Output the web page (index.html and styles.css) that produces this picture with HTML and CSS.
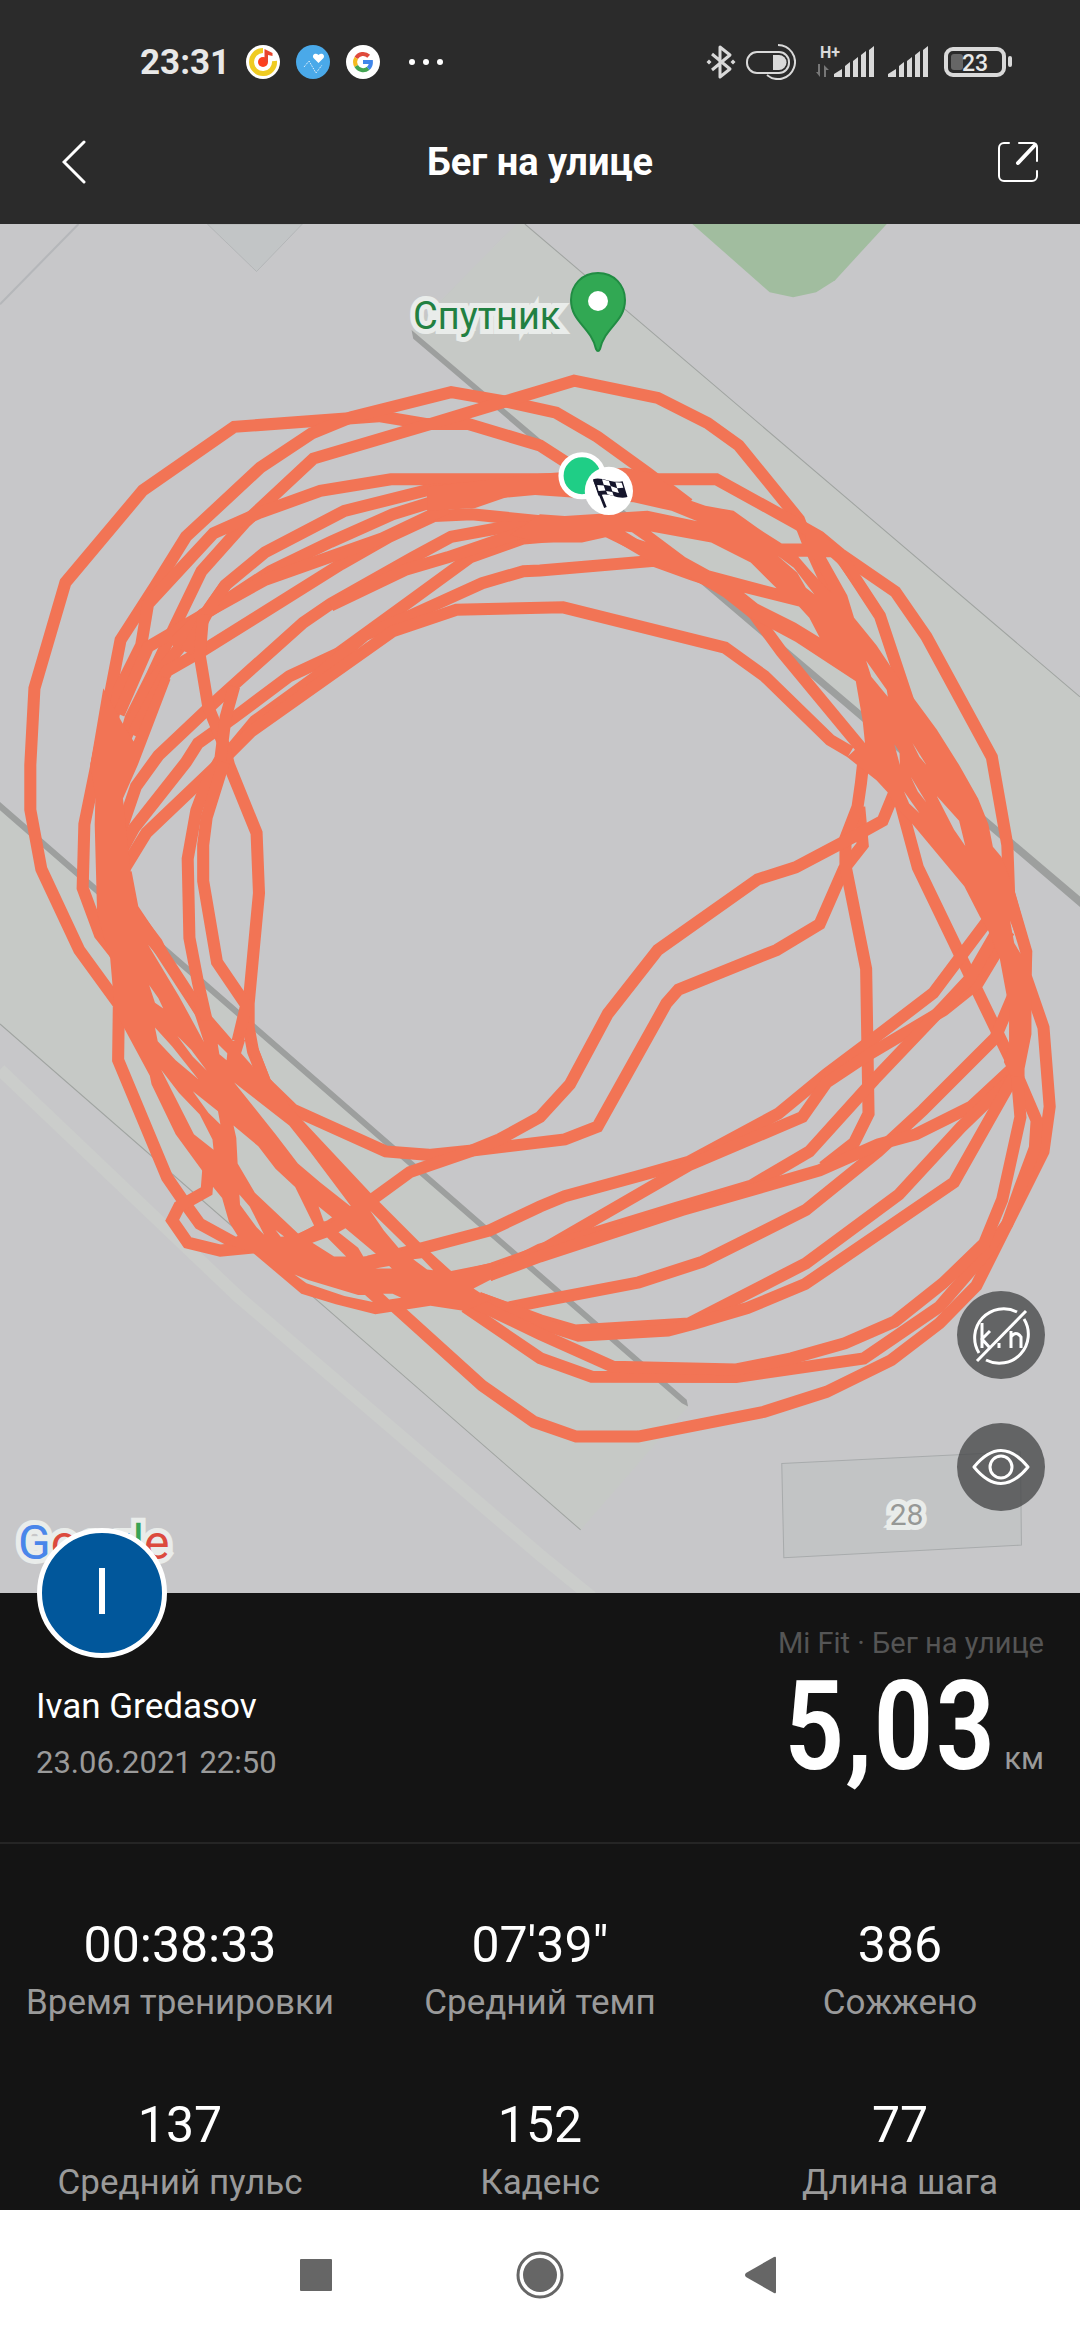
FILE: index.html
```html
<!DOCTYPE html>
<html lang="ru">
<head>
  <meta charset="UTF-8">
  <meta name="viewport" content="width=device-width, initial-scale=1.0">
  <title>Бег на улице</title>
  <link rel="stylesheet" href="styles.css">
</head>
<body>
  <!-- System status bar -->
  <div class="status-bar">
    <div class="status-left">
      <span class="clock">23:31</span>
      <svg class="app-icon" viewBox="0 0 34 34">
        <circle cx="17" cy="17" r="17" fill="#fff"/>
        <path d="M17 5.500A11.500 11.500 0 1 0 28.500 16" fill="none" stroke="#efcb22" stroke-width="5"/>
        <circle cx="17" cy="17" r="5" fill="#fc3f1d"/>
        <path d="M18.500 17V4l8 4v3l-4.500-1v7z" fill="#e8452c"/>
      </svg>
      <svg class="app-icon" viewBox="0 0 34 34">
        <circle cx="17" cy="17" r="17" fill="#4aa9e9"/>
        <path d="M22.500 18l-5-5c-2-3 2-6 5-3 3-3 7 0 5 3z" fill="#fff"/>
        <path d="M8 22l5-6 7 12 6-8" fill="none" stroke="#fff" stroke-width="1" stroke-dasharray="1 1"/>
      </svg>
      <svg class="app-icon" viewBox="0 0 34 34">
        <circle cx="17" cy="17" r="17" fill="#fff"/>
        <path d="M10.200 13a8 8 0 0 1 12.500-1.700" fill="none" stroke="#df4a3c" stroke-width="4"/>
        <path d="M10.200 13a8 8 0 0 0 0 8" fill="none" stroke="#f5bb1f" stroke-width="4"/>
        <path d="M10.200 21a8 8 0 0 0 12 2.400" fill="none" stroke="#43a553" stroke-width="4"/>
        <path d="M22.200 23.400a8 8 0 0 0 2.700-6.400H17" fill="none" stroke="#3f86ea" stroke-width="4"/>
      </svg>
      <svg class="more-icon" viewBox="0 0 36 8" fill="#fff">
        <circle cx="4" cy="4" r="3"/><circle cx="18" cy="4" r="3"/><circle cx="32" cy="4" r="3"/>
      </svg>
    </div>
    <div class="status-right">
      <svg class="bt-icon" viewBox="0 0 30 36" fill="none" stroke="#d9d9d9" stroke-width="3" stroke-linejoin="round">
        <path d="M6 10l18 15-10 8V3l10 8L6 26"/>
        <path d="M3 15.500l2.500 2.500L3 20.500.500 18zM27 15.500l2.500 2.500-2.500 2.500-2.500-2.500z" fill="#d9d9d9" stroke="none"/>
      </svg>
      <svg class="toggle-icon" viewBox="0 0 50 36" fill="none" stroke="#d9d9d9" stroke-width="2">
        <rect x="1" y="8" width="42" height="21" rx="10"/>
        <path d="M27 11h6a7 7 0 0 1 0 15h-6z" fill="#d9d9d9" stroke="none"/>
        <path d="M32 1a17 17 0 1 1-11 30"/>
      </svg>
      <svg class="signal-icon wide" viewBox="0 0 58 36" fill="#d9d9d9">
        <text class="net-type" x="4" y="14">H+</text>
        <path d="M18 33v-3l8-5v8zM29 33V22l5-4v15zM37 33V17l5-4v20zM45 33V11l5-4v26zM53 33V6l5-4v31z"/>
        <path d="M0 28h2v-8h2v13zM8 33V21l5 5h-3v7z" fill="#777"/>
      </svg>
      <svg class="signal-icon" viewBox="0 0 40 36" fill="#d9d9d9">
        <path d="M0 33v-3l8-5v8zM11 33V22l5-4v15zM19 33V17l5-4v20zM27 33V11l5-4v26zM35 33V6l5-4v31z"/>
      </svg>
      <svg class="battery-icon" viewBox="0 0 68 30">
        <rect x="2" y="2" width="58" height="26" rx="7" fill="none" stroke="#d9d9d9" stroke-width="4"/>
        <rect x="7" y="7" width="12" height="16" rx="3" fill="#666"/>
        <rect x="64" y="9" width="4" height="11" rx="2" fill="#d9d9d9"/>
        <text class="battery-level" x="31" y="24" text-anchor="middle">23</text>
      </svg>
    </div>
  </div>

  <!-- Title bar -->
  <header class="title-bar">
    <button class="icon-btn" aria-label="Назад">
      <svg class="back-icon" viewBox="0 0 24 44" fill="none" stroke="#fff" stroke-width="3" stroke-linecap="round">
        <path d="M22 2L2 22l20 20"/>
      </svg>
    </button>
    <h1>Бег на улице</h1>
    <button class="icon-btn" aria-label="Поделиться">
      <svg class="share-icon" viewBox="0 0 40 40" fill="none" stroke="#fff" stroke-width="2" stroke-linecap="round">
        <path d="M11 1H6a5 5 0 0 0-5 5v28a5 5 0 0 0 5 5h28a5 5 0 0 0 5-5v-5"/>
        <path d="M21 1h14a4 4 0 0 1 4 4v14"/>
        <path d="M20 21L37 3" stroke-width="4"/>
      </svg>
    </button>
  </header>

  <!-- Map with the route -->
  <section class="map">
    <svg class="map-canvas" viewBox="0 -3 3136 3976">
      <rect y="-3" width="3136" height="3976" fill="#c7c7c9"/>
      <!-- ground -->
      <path d="M1500-3L1195 305 3136 1970V1370L1524-3z" fill="#c6c9c6"/>
      <path d="M0 1680L1998 3430 1686 3789 0 2320z" fill="#c6c9c6"/>
      <path d="M2010-3l225 198 68 15 67-15 55-35L2575-3z" fill="#a1bd9f"/>
      <path d="M602-3L745 135 878-3z" fill="#c2c5c6" stroke="#acafb1" stroke-width="2"/>
      <path d="M2270 3596l693-34 3 271-690 37z" fill="#c2c4c5" stroke="#a8abac" stroke-width="3"/>
      <path d="M0 2453l690 657 878 752 150 122" fill="none" stroke="#cbcdcb" stroke-width="36"/>
      <path d="M228-3L0 230" stroke="#b5b7ba" stroke-width="6"/>
      <path d="M1524-3l1612 1373M0 2320l1686 1469" fill="none" stroke="#a0a4a1" stroke-width="3"/>
      <path d="M1195 305l5 25 1936 1650v-30zM0 1675v24l1980 1722 18 10-4-20z" fill="#9d9f9e"/>

      <!-- route -->
      <g class="route">
        <path d="M430 2400L350 2270 230 2105 120 1870 88 1698 88 1568 100 1345 190 1038 415 770 680 586 1100 555 1240 578 1360 578 1568 640 1700 725"/>
        <path d="M280 1568L350 1205 450 1050 540 905 755 705 905 605 1020 558 1310 485 1480 515 1615 545 1735 615 1880 720 2000 810"/>
        <path d="M340 1568L380 1430 440 1310 510 1160 585 1005 710 865 910 678 1250 578 1458 515 1568 482 1667 452 1910 502 2055 575 2145 640 2320 855 2345 920 2445 1140"/>
        <path d="M300 1568L345 1350 410 1220 430 1100 620 895 755 835 930 772 1135 738 2080 738 2310 865 2380 905 2440 955 2600 1065 2690 1195 2880 1545 2925 1800 2930 1940 2980 2110 2978 2180 3030 2330 3048 2560 3030 2690 2925 2900 2835 3080 2728 3189 2588 3296 2400 3388 2218 3446 1853 3518 1673 3518 1550 3475 1400 3370 1140 3135"/>
        <path d="M360 1500L430 1340 560 1180 655 1045 770 950 1000 830 1240 770 1600 755"/>
        <path d="M345 1420L430 1225 610 1120 785 1005 960 920 1140 840 1300 790 1568 765"/>
        <path d="M385 1480L485 1295 590 1235 990 985 1130 905 1260 845 1370 840 1568 860"/>
        <path d="M500 1220L590 1130 770 1030 1110 910 1300 820"/>
        <path d="M540 1240L610 1110 655 1045"/>
        <path d="M330 1820L395 1630 460 1540 640 1370 880 1155 960 1100 1200 965 1310 905 1450 880 1600 875"/>
        <path d="M330 1860L390 1750 540 1560 575 1505 680 1430 840 1310 980 1245 1180 1100 1365 965 1520 910 1640 900"/>
        <path d="M960 1105L1180 1000 1300 965 1520 890"/>
        <path d="M330 1920L425 1765 640 1560 740 1440 920 1310 1060 1190 1190 1135 1400 1040 1520 1005 1568 1003 1900 975 2010 1015 2120 1050"/>
        <path d="M640 1560L730 1470 1140 1180 1325 1117 1635 1110 2105 1227 2220 1310 2410 1495 2470 1530"/>
        <path d="M590 1130L580 1250 605 1400 650 1510 665 1568 745 1765 752 1940 722 2260 722 2330 735 2400 770 2490 850 2568 1120 2690 1245 2700 1365 2688 1640 2655 1735 2618 1935 2260 1970 2220 2255 2105 2380 2030 2450 1870 2505 1800 2495 1690"/>
        <path d="M680 1340L655 1430 640 1550 600 1620 570 1700 545 1840 550 2070 575 2200 600 2310 615 2390"/>
        <path d="M650 1560L600 1720 590 1800 590 1905 630 2140 715 2265 690 2370"/>
        <path d="M365 1880L385 1985 455 2090 585 2290 680 2400"/>
        <path d="M315 1400L280 1568 245 1740 240 1925 290 2060 345 2130"/>
        <path d="M345 2270L343 2425 485 2765 540 2845 580 2900 690 2960"/>
        <path d="M605 2740L600 2805 520 2850 500 2890 545 2955 640 2978 780 2965"/>
        <path d="M1765 890L2010 1010 2130 1070 2190 1130 2270 1240 2510 1530"/>
        <path d="M2400 930L2450 975 2555 1135 2640 1390"/>
        <path d="M2510 1530L2500 1620 2490 1690 2455 1780 2455 1860 2515 2160 2522 2580 2480 2665 2390 2735"/>
        <path d="M2600 1640L2563 1730 2490 1770 2310 1865 2200 1900 1910 2105 1765 2290 1655 2495 1568 2590 1450 2655 1365 2690 1190 2750 1080 2830 960 2905 860 2950"/>
        <path d="M2615 1680L2665 1865 2935 2425 3010 2600 3005 2680 2960 2800 2925 2900 2858 2990 2728 3141 2508 3291 2138 3345 1718 3344 1568 3290 1350 3141"/>
        <path d="M2890 1990L2710 2230 2540 2360 2400 2465 2260 2580 2000 2720 1860 2760 1640 2820 1568 2850 1420 2920 1230 2970 1070 3010"/>
        <path d="M2930 2050L2840 2200 2740 2280 2520 2410 2400 2490 2330 2590 2000 2730 1740 2880 1568 2980 1430 3030 1310 3060"/>
        <path d="M2890 2060L2815 2190 2740 2270 2540 2480 2350 2690 2180 2790 1960 2855 1568 2975 1420 3050"/>
        <path d="M2945 2230L2890 2360 2680 2570 2550 2690 2340 2860 2040 3010 1855 3070 1568 3125 1470 3145 1390 3115"/>
        <path d="M2960 2430L2820 2560 2660 2640 2550 2670 2380 2745 1980 2860 1568 2995 1420 3050"/>
        <path d="M2935 2480L2790 2620 2610 2815 2340 3015 2000 3190 1670 3210 1568 3180 1390 3115"/>
        <path d="M2945 2470L2770 2780 2338 3075 2170 3145 2015 3190 1940 3210 1680 3225 1540 3180"/>
        <path d="M2950 2440L2963 2590 2910 2830 2858 2957 2738 3073 2598 3184 2453 3247 2298 3291 2138 3323 1780 3315 1568 3220 1380 3130"/>
      </g>

      <!-- stretches where the laps run on top of each other -->
      <path class="route-fill" d="M300 1345L262 1568 277 1658 275 1740 282 2000 320 2130 333 2280 365 2340 435 2470 440 2495 510 2640 590 2750 620 2795 645 2825 665 2895 690 2935 655 2957 735 2985 875 3103 975 3134 1090 3163 1250 3138 1350 3153 1425 3121 1375 3088 1430 3060 1430 3013 1310 3037 1225 2960 1080 2815 855 2575 785 2480 750 2390 700 2360 675 2370 615 2310 585 2310 470 2075 402 1985 383 1935 378 1860 368 1770 357 1665 400 1568 495 1320 470 1310 388 1500 352 1440z
        M430 2090L480 2150 565 2290 592 2372 520 2240z
        M433 2207L460 2245 474 2275 450 2258z
        M450 2330L500 2385 575 2480 510 2425 458 2370z
        M515 2355L555 2395 600 2455 560 2415z
        M468 2453L520 2520 580 2583 617 2655 620 2685 563 2640z
        M560 2515L633 2573 640 2612 605 2578z
        M680 2490L840 2615 900 2690 1022 2853 930 2780 865 2725 800 2640z
        M713 2363L740 2450 700 2405z
        M632 2377L660 2405 658 2425 637 2408z
        M678 2615L750 2675 800 2740 857 2793 912 2905 867 2930 740 2810 690 2725 686 2650z
        M695 2815L725 2850 767 2932 745 2910 697 2845z
        M800 2918L825 2937 815 2938z
        M925 2850L972 2888 960 2897 940 2893z
        M1075 2862L1187 2972 1163 2977 1115 2920z
        M983 2925L1003 2913 1095 2990 1055 2995 1040 2970z
        M907 2955L950 2940 1005 2995 970 2995z
        M1090 3030L1130 3023 1138 3030z
        M1200 3003L1225 3000 1258 3035 1240 3033z
        M855 3047L895 3063 1040 3107 1060 3107 1083 3127 1000 3110 890 3073z
        M1112 3103L1140 3103 1165 3115 1130 3120z"/>
      <path class="route-fill" d="M1240 760L1568 722 1815 705 1895 720 1945 757 1990 795 2048 815 2130 830 2200 880 2270 925 2340 925 2338 895 2390 895 2440 945 2440 970 2545 1140 2587 1283 2650 1370 2720 1465 2785 1568 2840 1665 2870 1740 2883 1805 2908 1835 2945 1930 2995 2110 2995 2350 2975 2450 2975 2475 2935 2470 2915 2430 2930 2380 2930 2275 2903 2130 2870 2050 2845 2008 2800 1920 2650 1740 2600 1690 2580 1650 2545 1612 2460 1545 2500 1508 2512 1508 2505 1440 2485 1325 2310 1210 2170 1135 2100 1080 2000 1020 1900 985 1765 905 1690 922 1568 922 1480 900 1568 840 1640 845 1880 830 2025 860 1950 830 1840 805 1640 790 1500 780 1380 822 1240 830z
        M1815 890L1835 892 1875 920 1850 912z
        M1890 890L2065 922 2180 980 2255 1055 2060 1003 1990 965z
        M2160 1068L2320 1108 2350 1140 2380 1198 2310 1155 2200 1100z
        M2258 960L2305 995 2365 1073 2340 1053 2315 1010z
        M2318 963L2360 963 2415 1070 2350 1000z
        M2398 965L2420 965 2545 1140 2587 1283 2545 1220 2480 1140 2460 1075z
        M2515 1265L2575 1350 2578 1370 2530 1312z
        M2597 1508L2612 1530 2613 1568z
        M2650 1505L2690 1568 2670 1545z
        M2645 1603L2690 1677 2665 1645z
        M2625 1645L2670 1708 2640 1680z
        M2720 1658L2785 1730 2803 1803 2770 1755z
        M2933 2020L2965 2105 2965 2118 2945 2085z"/>

      <!-- start and finish -->
      <circle cx="1690" cy="728" r="61" fill="#1fce86" stroke="#fff" stroke-width="15"/>
      <circle cx="1768" cy="772" r="70" fill="#fff"/>
      <path d="M1726 740l32 80" stroke="#15152b" stroke-width="8"/>
      <path d="M1722 738c30-8 50 14 86 6l14 46c-34 8-50-16-84-4z" fill="#15152b"/>
      <path d="M1748 738l20 5 5 15-20-4zM1787 747l18 1 5 15-18 1zM1734 755l19 1 5 15-20 1zM1773 758l19 6 5 14-19-5zM1760 772l18 3 4 12-18-5z" fill="#fff"/>
    </svg>

    <div class="place">
      <span class="place-name">Спутник</span>
      <svg class="pin-icon" viewBox="0 0 56 80">
        <path d="M28 1C12 1 1 13 1 28c0 22 20 27 25 49q2 4 4 0c5-22 25-27 25-49C55 13 44 1 28 1z" fill="#31a853" stroke="#218c43" stroke-width="2"/>
        <circle cx="28" cy="29" r="10" fill="#fff"/>
      </svg>
    </div>
    <span class="house-number">28</span>

    <div class="google-logo"><span class="blue">G</span><span class="red">o</span><span class="yellow">o</span><span class="blue">g</span><span class="green">l</span><span class="red">e</span></div>

    <div class="map-buttons">
      <button class="round-btn" aria-label="Скрыть километры">
        <svg viewBox="0 0 88 88" fill="none" stroke="#fff" stroke-width="3">
          <path d="M60 21A29 29 0 0 0 22 62M29 69A29 29 0 0 0 67 28"/>
          <path d="M20 70L69 20"/>
          <path d="M25 32v25M33 40l-8 8 8 9M42 52v5M54 57V40M54 46q5-7 10 0v11"/>
        </svg>
      </button>
      <button class="round-btn" aria-label="Показать карту">
        <svg viewBox="0 0 88 88" fill="none" stroke="#fff" stroke-width="3" stroke-linejoin="round">
          <path d="M17 44q27-33 54 0-27 33-54 0z"/>
          <circle cx="44" cy="44" r="11"/>
        </svg>
      </button>
    </div>
  </section>

  <!-- Workout summary -->
  <section class="summary">
    <div class="avatar">I</div>
    <div class="user">
      <div class="user-name">Ivan Gredasov</div>
      <div class="date">23.06.2021 22:50</div>
    </div>
    <div class="distance">
      <div class="source">Mi Fit · Бег на улице</div>
      <div class="distance-value"><strong>5,03</strong> <span>км</span></div>
    </div>
  </section>

  <dl class="stats">
    <div><dd>00:38:33</dd><dt>Время тренировки</dt></div>
    <div><dd>07'39"</dd><dt>Средний темп</dt></div>
    <div><dd>386</dd><dt>Сожжено</dt></div>
    <div><dd>137</dd><dt>Средний пульс</dt></div>
    <div><dd>152</dd><dt>Каденс</dt></div>
    <div><dd>77</dd><dt>Длина шага</dt></div>
  </dl>

  <!-- System navigation -->
  <nav class="nav-bar">
    <button aria-label="Недавние"><svg viewBox="0 0 48 48"><rect x="8" y="8" width="32" height="32" rx="1"/></svg></button>
    <button aria-label="Домой"><svg viewBox="0 0 48 48"><circle cx="24" cy="24" r="17"/><circle cx="24" cy="24" r="22" fill="none" stroke="#666" stroke-width="3"/></svg></button>
    <button aria-label="Назад"><svg viewBox="0 0 48 48"><path d="M36 7v34q0 2-2 1L6 26q-2-2 0-4L34 6q2-1 2 1z"/></svg></button>
  </nav>
</body>
</html>
```

FILE: styles.css
```css
* {
  box-sizing: border-box;
}
body {
  margin: 0;
  min-height: 100vh;
  display: flex;
  flex-direction: column;
  font-family: Roboto, "Noto Sans", sans-serif;
  background-color: #141414;
  color: #fff;
}
button {
  padding: 0;
  border: none;
  background: none;
  cursor: pointer;
}
svg {
  display: block;
}

/* Status bar */
.status-bar {
  display: flex;
  justify-content: space-between;
  align-items: center;
  height: 100px;
  padding: 24px 68px 0 140px;
  background-color: #2b2b2b;
}
.status-left, .status-right {
  display: flex;
  align-items: center;
}
.clock {
  margin-right: 16px;
  font-size: 35px;
  font-weight: bold;
  color: #e8e8e8;
}
.app-icon {
  width: 34px;
  height: 34px;
  margin-right: 16px;
}
.more-icon {
  width: 36px;
  height: 8px;
  margin-left: 12px;
}
.bt-icon {
  width: 30px;
  height: 36px;
  margin-right: 10px;
}
.toggle-icon {
  width: 50px;
  height: 36px;
  margin-right: 20px;
}
.signal-icon {
  width: 40px;
  height: 36px;
  margin-right: 16px;
}
.signal-icon.wide {
  width: 58px;
  margin-right: 14px;
}
.battery-icon {
  width: 68px;
  height: 30px;
}
.net-type {
  font-size: 16px;
  font-weight: bold;
}
.battery-level {
  font-size: 23px;
  font-weight: 500;
  fill: #e8e8e8;
}

/* Title bar */
.title-bar {
  display: grid;
  grid-template-columns: 1fr auto 1fr;
  align-items: center;
  height: 124px;
  padding: 0 42px 0 42px;
  background-color: #2b2b2b;
}
.title-bar h1 {
  margin: 0;
  font-size: 38px;
  line-height: 48px;
}
.icon-btn {
  display: flex;
  width: 64px;
  height: 60px;
  align-items: center;
  justify-content: center;
}
.icon-btn:last-child {
  justify-self: end;
  justify-content: flex-end;
}
.back-icon {
  width: 24px;
  height: 44px;
}
.share-icon {
  width: 40px;
  height: 40px;
}

/* Map */
.map {
  position: relative;
}
.map-canvas {
  width: 100%;
}
.route path {
  fill: none;
  stroke: #f27455;
  stroke-width: 35;
}
.route-fill {
  fill: #f27455;
  fill-rule: evenodd;
}
.place {
  position: absolute;
  top: 48px;
  right: 42%;
  display: flex;
  align-items: flex-end;
  gap: 10px;
}
.place-name, .house-number, .google-logo {
  -webkit-text-stroke: 10px #e9ecea;
  paint-order: stroke fill;
}
.place-name {
  font-size: 38px;
  line-height: 72px;
  color: #218041;
}
.pin-icon {
  width: 56px;
  height: 80px;
}
.house-number {
  position: absolute;
  right: 14.5%;
  bottom: 60px;
  font-size: 30px;
  line-height: 36px;
  color: #969896;
}
.google-logo {
  position: absolute;
  left: 18px;
  bottom: 22px;
  font-size: 48px;
  line-height: 56px;
}
.blue {
  color: #4a86ea;
}
.red {
  color: #dc4a3d;
}
.yellow {
  color: #f5bb1f;
}
.green {
  color: #38a355;
}
.map-buttons {
  position: absolute;
  right: 35px;
  bottom: 82px;
  display: flex;
  flex-direction: column;
  gap: 44px;
}
.round-btn {
  width: 88px;
  height: 88px;
  border-radius: 50%;
  background-color: rgba(70, 72, 73, 0.78);
}

/* Summary */
.summary {
  position: relative;
  display: flex;
  justify-content: space-between;
  height: 251px;
  padding: 32px 36px 0;
  border-bottom: 2px solid #252525;
}
.avatar {
  position: absolute;
  top: -65px;
  left: 37px;
  width: 130px;
  height: 130px;
  border: 5px solid #fff;
  border-radius: 50%;
  background-color: #01579b;
  font-size: 64px;
  line-height: 120px;
  text-align: center;
}
.user {
  padding-top: 58px;
}
.user-name {
  font-size: 35px;
  line-height: 48px;
}
.date {
  margin-top: 8px;
  font-size: 31px;
  line-height: 48px;
  color: #9a9a9a;
}
.distance {
  text-align: right;
}
.source {
  font-size: 29px;
  line-height: 36px;
  color: #555;
}
.distance-value {
  font-size: 31px;
  line-height: 132px;
  color: #9a9a9a;
}
.distance-value strong {
  font-family: "Roboto Condensed", "Liberation Sans Narrow", Roboto, sans-serif;
  font-size: 124px;
  font-weight: 500;
  color: #fff;
}

/* Stats */
.stats {
  flex: 1;
  display: grid;
  grid-template-columns: repeat(3, 1fr);
  align-content: start;
  row-gap: 64px;
  margin: 0;
  padding-top: 69px;
  text-align: center;
}
.stats div {
  display: flex;
  flex-direction: column;
}
.stats dd {
  margin: 0;
  font-size: 50px;
  line-height: 64px;
}
.stats dt {
  font-size: 35px;
  line-height: 52px;
  color: #9a9a9a;
}

/* Navigation */
.nav-bar {
  display: flex;
  justify-content: center;
  align-items: center;
  gap: 176px;
  height: 130px;
  background-color: #fff;
}
.nav-bar svg {
  width: 48px;
  height: 48px;
  fill: #666;
}
```
